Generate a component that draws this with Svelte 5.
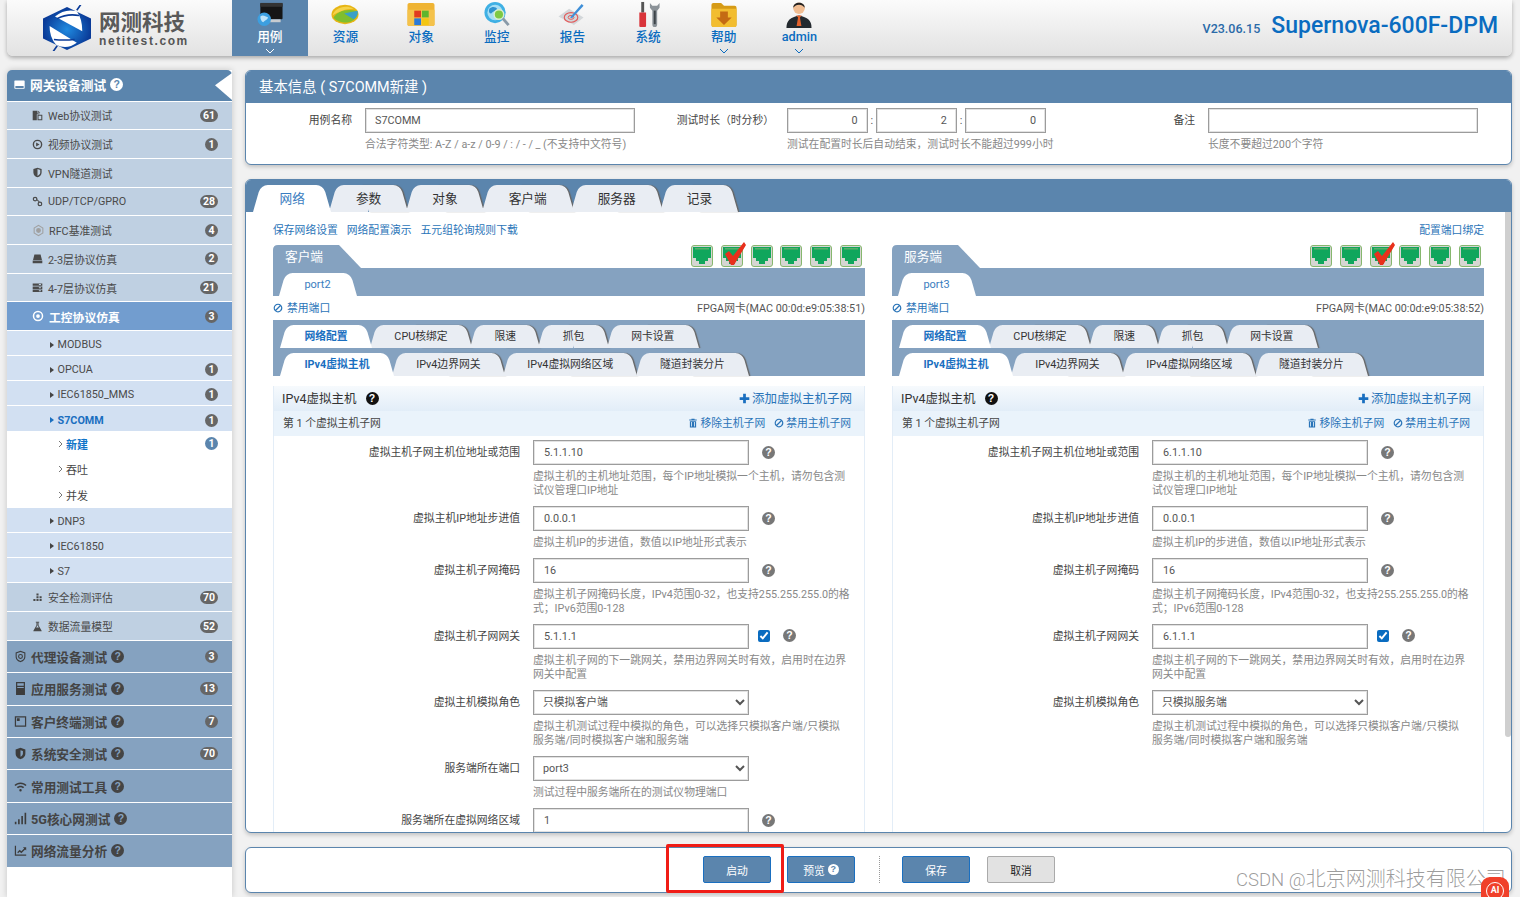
<script>
  // sidebar data
  const topItems = [
    { icon: "file", label: "Web协议测试", n: 61 },
    { icon: "play", label: "视频协议测试", n: 1 },
    { icon: "shield", label: "VPN隧道测试" },
    { icon: "link", label: "UDP/TCP/GPRO", n: 28 },
    { icon: "gear", label: "RFC基准测试", n: 4, light: true },
    { icon: "hdd", label: "2-3层协议仿真", n: 2 },
    { icon: "server", label: "4-7层协议仿真", n: 21 }
  ];
  const protoBefore = [
    { label: "MODBUS" },
    { label: "OPCUA", n: 1 },
    { label: "IEC61850_MMS", n: 1 },
    { label: "S7COMM", n: 1, on: true }
  ];
  const protoAfter = [{ label: "DNP3" }, { label: "IEC61850" }, { label: "S7" }];
  const subItems = [
    { label: "新建", n: 1, on: true },
    { label: "吞吐" },
    { label: "并发" }
  ];
  const bottomItems = [
    { icon: "bars", label: "安全检测评估", n: 70 },
    { icon: "flask", label: "数据流量模型", n: 52 }
  ];
  const groups = [
    { icon: "shieldring", label: "代理设备测试", n: 3 },
    { icon: "calc", label: "应用服务测试", n: 13 },
    { icon: "frame", label: "客户终端测试", n: 7 },
    { icon: "shieldfull", label: "系统安全测试", n: 70 },
    { icon: "wifi", label: "常用测试工具" },
    { icon: "signal", label: "5G核心网测试" },
    { icon: "line", label: "网络流量分析" }
  ];
  const paths = {
    file: "M1 1h7v4h3v1H7v9H1z M9 1l3 3H9z M8 7h7v8H8z M9.5 8.500v5h4v-5z",
    play: "M8 1a7 7 0 1 0 0 14A7 7 0 0 0 8 1zm0 2a5 5 0 1 1 0 10A5 5 0 0 1 8 3z M6 5l5 3-5 3z",
    shield: "M8 1l6 2v5c0 4-3 6-6 7-3-1-6-3-6-7V3z M8 3v10c2-1 4-2.500 4-5V4.500z",
    link: "M4.500 1a3.500 3.500 0 1 0 0 7 3.500 3.500 0 0 0 0-7zm0 1.800a1.700 1.700 0 1 1 0 3.400 1.700 1.700 0 0 1 0-3.400z M11.500 8a3.500 3.500 0 1 0 0 7 3.500 3.500 0 0 0 0-7zm0 1.800a1.700 1.700 0 1 1 0 3.400 1.700 1.700 0 0 1 0-3.400z M7 6l1-1 3 3-1 1z",
    gear: "M8 1l6 3.500v7L8 15l-6-3.500v-7z M8 2.500L3.300 5.200v5.600L8 13.500l4.700-2.700V5.200z M8 5a3 3 0 1 0 0 6 3 3 0 0 0 0-6z",
    hdd: "M3.500 2h9l2 8h-13z M1 11h14v4H1z",
    disk: "M1.500 2h13q1 0 1 1v10q0 1-1 1h-13q-1 0-1-1V3q0-1 1-1z M2 10v3h12v-3z",
    server: "M1 2h14v3.500H1z M1 6.500h14V10H1z M1 11h14v3.500H1z M10 3h3v1.500h-3z M10 7.500h3V9h-3z M10 12h3v1.500h-3z",
    target: "M8 1a7 7 0 1 0 0 14A7 7 0 0 0 8 1zm0 2a5 5 0 1 1 0 10A5 5 0 0 1 8 3z M8 5.500a2.500 2.500 0 1 0 0 5 2.500 2.500 0 0 0 0-5z",
    bars: "M6.500 2h3v3h-3z M6.500 6h3v3h-3z M6.500 10h3v3h-3z M2 10h3v3H2z M11 6h3v3h-3z M11 10h3v3h-3z",
    flask: "M5.500 1h5v1.300h-1v4L14 14v1H2v-1l4.500-7.700v-4h-1z M7.800 2.300v4.300L6 9.500h4L8.200 6.600V2.300z",
    shieldring: "M8 1l6 2v5c0 4-3 6-6 7-3-1-6-3-6-7V3z M8 2.500L3.300 4v4c0 3 2.200 4.700 4.700 5.600 2.500-.9 4.700-2.600 4.700-5.600V4z M8 5a3 3 0 1 0 0 6 3 3 0 0 0 0-6z M8 6.300a1.700 1.700 0 1 1 0 3.400 1.700 1.700 0 0 1 0-3.400z",
    calc: "M2.500 0h11v16h-11z M4 1.500v3h8v-3z M4 6v1.500h8V6z",
    frame: "M1 1.500h14v13H1z M2.500 3v10h11V3z M3.500 4h3.500v3.500H3.500z",
    shieldfull: "M8 1l6 2v5c0 4-3 6-6 7-3-1-6-3-6-7V3z M8 4v8c1.500-.8 3-2 3-4V5z",
    wifi: "M8 3C5 3 2.500 4.200 .5 6L2 7.500C3.500 6 5.600 5 8 5s4.500 1 6 2.500L15.500 6C13.500 4.200 11 3 8 3z M8 7c-1.800 0-3.400.7-4.500 1.800L5 10.300C5.800 9.500 6.800 9 8 9s2.200.5 3 1.300l1.500-1.500C11.400 7.700 9.800 7 8 7z M8 11a1.500 1.500 0 1 0 0 3 1.500 1.500 0 0 0 0-3z",
    signal: "M1 12h2v3H1z M5 9h2v6H5z M9 5h2v10H9z M13 1h2v14h-2z",
    line: "M1 2h1.500v11H15v1.500H1z M4 10l3-3 2 2 3.500-3.500L11 4h4v4l-1.300-1.300L9 11.500l-2-2-2 2z",
    ban: "M8 1a7 7 0 1 0 0 14A7 7 0 0 0 8 1zm0 1.800c1.100 0 2.100.3 2.900.9l-7.200 7.200A5.200 5.200 0 0 1 8 2.800z M12.300 5.100A5.200 5.200 0 0 1 5.100 12.300z",
    trash: "M5.500 1h5v1.500H14V4H2V2.500h3.500z M3 5h10v10H3z M5 6.500v7h1.300v-7z M9.700 6.500v7H11v-7z",
    plus: "M6 1h4v5h5v4h-5v5H6v-5H1V6h5z"
  };

  const nav = [
    { key: "case", label: "用例", on: true, more: true },
    { key: "res", label: "资源" },
    { key: "obj", label: "对象" },
    { key: "mon", label: "监控" },
    { key: "rep", label: "报告" },
    { key: "sys", label: "系统" },
    { key: "help", label: "帮助", more: true },
    { key: "admin", label: "admin", more: true }
  ];

  const mainTabs = ["网络", "参数", "对象", "客户端", "服务器", "记录"];
  const cfgTabs = ["网络配置", "CPU核绑定", "限速", "抓包", "网卡设置"];
  const ipTabs = ["IPv4虚拟主机", "IPv4边界网关", "IPv4虚拟网络区域", "隧道封装分片"];
  const plugs = [0, 1, 2, 3, 4, 5];

  const roleHint = "虚拟主机测试过程中模拟的角色，可以选择只模拟客户端/只模拟服务端/同时模拟客户端和服务端";
  const client = {
    title: "客户端",
    port: "port2",
    checked: 1,
    mac: "FPGA网卡(MAC 00:0d:e9:05:38:51)",
    rows: [
      { label: "虚拟主机子网主机位地址或范围", value: "5.1.1.10", hint: "虚拟主机的主机地址范围，每个IP地址模拟一个主机，请勿包含测试仪管理口IP地址" },
      { label: "虚拟主机IP地址步进值", value: "0.0.0.1", hint: "虚拟主机IP的步进值，数值以IP地址形式表示" },
      { label: "虚拟主机子网掩码", value: "16", hint: "虚拟主机子网掩码长度，IPv4范围0-32，也支持255.255.255.0的格式；IPv6范围0-128" },
      { label: "虚拟主机子网网关", value: "5.1.1.1", check: true, hint: "虚拟主机子网的下一跳网关，禁用边界网关时有效，启用时在边界网关中配置" },
      { label: "虚拟主机模拟角色", select: "只模拟客户端", noHelp: true, hint: roleHint },
      { label: "服务端所在端口", select: "port3", noHelp: true, hint: "测试过程中服务端所在的测试仪物理端口" },
      { label: "服务端所在虚拟网络区域", value: "1" }
    ]
  };
  const server = {
    title: "服务端",
    port: "port3",
    checked: 2,
    mac: "FPGA网卡(MAC 00:0d:e9:05:38:52)",
    rows: [
      { label: "虚拟主机子网主机位地址或范围", value: "6.1.1.10", hint: client.rows[0].hint },
      { label: "虚拟主机IP地址步进值", value: "0.0.0.1", hint: client.rows[1].hint },
      { label: "虚拟主机子网掩码", value: "16", hint: client.rows[2].hint },
      { label: "虚拟主机子网网关", value: "6.1.1.1", check: true, hint: client.rows[3].hint },
      { label: "虚拟主机模拟角色", select: "只模拟服务端", noHelp: true, hint: roleHint }
    ]
  };
</script>

{#snippet icon(name, cls = "")}
  <svg class="ico {cls}" viewBox="0 0 16 16"><path d={paths[name]} fill="currentColor" fill-rule="evenodd" /></svg>
{/snippet}

{#snippet badge(n, on = false)}
  {#if n !== undefined}
    <span class="badge" class:blue={on}>{n}</span>
  {/if}
{/snippet}

{#snippet navIcon(key)}
  <svg class="nav-ico" viewBox="0 0 30 28">
    {#if key === "case"}
      <rect x="5" y="2" width="23" height="17" rx="1" fill="#151515" />
      <rect x="5" y="2" width="23" height="4" fill="#333" />
      <rect x="14" y="19" width="12" height="3" fill="#c8ccd0" />
      <circle cx="9" cy="19" r="7" fill="#3c9fe0" />
      <path d="M5 16c3-2 5 0 8 1-1 3-4 3-5 5-2-1-3-3-3-6z" fill="#bfe3f8" />
    {:else if key === "res"}
      <ellipse cx="15" cy="14" rx="14" ry="10" fill="#e7b514" />
      <path d="M3 17c5-6 10-9 24-7 3 4-1 10-8 12-6 1-13-1-16-5z" fill="#7fbe2e" />
      <path d="M14 13l14-3c1 3-1 7-4 9z" fill="#3aa0c8" />
      <path d="M2 15c2-7 12-12 22-7-9 0-15 3-22 7z" fill="#f5d34a" />
    {:else if key === "obj"}
      <path d="M1 4q0-2 2-2h24q2 0 2 2v20q0 2-2 2H3q-2 0-2-2z" fill="#efb434" />
      <path d="M1 9h28v15q0 2-2 2H3q-2 0-2-2z" fill="#f4c24b" />
      <rect x="8" y="10" width="7" height="7" fill="#e03a20" /><rect x="16" y="10" width="7" height="7" fill="#5fb52e" />
      <rect x="8" y="18" width="7" height="7" fill="#2b7bd8" /><rect x="16" y="18" width="7" height="7" fill="#f3c612" />
    {:else if key === "mon"}
      <circle cx="13" cy="12" r="11" fill="#3fb0e4" />
      <circle cx="13" cy="12" r="8" fill="#a6def5" />
      <path d="M7 8c3-3 7-2 8 0-1 3-4 2-6 5-2 0-3-2-2-5z" fill="#2f92cf" />
      <circle cx="17" cy="14" r="5" fill="#7ec943" stroke="#d8eed0" stroke-width="1.500" />
      <path d="M21 18l6 7" stroke="#8a9aa8" stroke-width="3" />
    {:else if key === "rep"}
      <path d="M1 16l11-8 15 9-10 8z" fill="#d3d7da" />
      <ellipse cx="14" cy="17" rx="7" ry="5" fill="none" stroke="#e25a5a" stroke-width="1.200" />
      <ellipse cx="14" cy="17" rx="3" ry="2" fill="none" stroke="#e25a5a" />
      <path d="M13 17L25 3l2 2-12 13z" fill="#3f8fd8" />
    {:else if key === "sys"}
      <rect x="8" y="1" width="3" height="11" fill="#555" />
      <path d="M6 12h7v14q0 1-1 1H7q-1 0-1-1z" fill="#d9343a" />
      <path d="M17 2v5l2.500 3v14q0 3 2.500 3t2.500-3V10L27 7V2l-2.500 3h-5z" fill="#8b9298" />
      <rect x="21" y="10" width="2" height="14" fill="#3c4348" />
    {:else if key === "help"}
      <path d="M2 4q0-2 2-2h8l3 3h11q2 0 2 2v18q0 2-2 2H4q-2 0-2-2z" fill="#d69b16" />
      <path d="M2 8h26v17q0 2-2 2H4q-2 0-2-2z" fill="#f2bd30" />
      <path d="M11 11h8v6h4l-8 8-8-8h4z" fill="#c46a14" />
    {:else}
      <circle cx="15" cy="7.500" r="6" fill="#f1bd92" />
      <path d="M9 7c0-7 12-7 12 0-2-2-3-3-6-3s-4 1-6 3z" fill="#222" />
      <path d="M2 28c0-8 4-11 13-13 9 2 13 5 13 13z" fill="#23292e" />
      <path d="M12 15h6l-2 2 1.500 9h-5L14 17z" fill="#e2602a" />
    {/if}
  </svg>
{/snippet}

{#snippet plug(checked)}
  <span class="plug">
    <svg viewBox="0 0 22 22" width="22" height="22">
      <rect x=".5" y=".5" width="21" height="21" rx="2.500" fill="#d6d6d2" stroke="#86b76e" />
      <path d="M2 2h18v11h-3v3h-3v3H8v-3H5v-3H2z" fill="#10a65c" />
      <rect x="4" y="3" width="14" height="1.500" fill="#5cae68" />
    </svg>
    {#if checked}
      <svg class="tick" viewBox="0 0 24 26" width="24" height="26">
        <path d="M2 13l4-3 4 5L21 1l2 3-12 20h-3z" fill="#e8301c" />
      </svg>
    {/if}
  </span>
{/snippet}

{#snippet tabs(list, size)}
  <div class="tabs {size}">
    {#each list as t, i}
      <span class="tab" class:active={i === 0}><span class="tab-text">{t}</span></span>
    {/each}
  </div>
{/snippet}

{#snippet panel(p)}
  <section class="panel">
    <div class="panel-head">
      <span class="panel-title">{p.title}</span>
      <span class="plugs">
        {#each plugs as i}
          {@render plug(i === p.checked)}
        {/each}
      </span>
    </div>
    <div class="port-bar">
      <span class="tab active"><span class="tab-text">{p.port}</span></span>
    </div>
    <div class="port-info">
      <a class="link">{@render icon("ban", "sm")}禁用端口</a>
      <span>{p.mac}</span>
    </div>
    <div class="tab-block">
      {@render tabs(cfgTabs, "small")}
      {@render tabs(ipTabs, "small second")}
    </div>
    <div class="section">
      <div class="section-head">
        <span class="section-title">IPv4虚拟主机 <span class="q black">?</span></span>
        <a class="link add">{@render icon("plus", "plus")}添加虚拟主机子网</a>
      </div>
      <div class="subnet-head">
        <span>第 1 个虚拟主机子网</span>
        <span class="subnet-links">
          <a class="link">{@render icon("trash", "sm")}移除主机子网</a>
          <a class="link">{@render icon("ban", "sm")}禁用主机子网</a>
        </span>
      </div>
      <div class="form">
        {#each p.rows as r}
          <div class="form-row">
            <label class="form-label">{r.label}</label>
            <div class="form-ctl">
              {#if r.select}
                <select class="field wide pick">
                  <option>{r.select}</option>
                </select>
              {:else}
                <input class="field wide" value={r.value} />
              {/if}
              {#if r.check}
                <input class="cb" type="checkbox" checked />
              {/if}
              {#if !r.noHelp}
                <span class="q gray">?</span>
              {/if}
            </div>
            {#if r.hint}
              <p class="hint form-hint">{r.hint}</p>
            {/if}
          </div>
        {/each}
      </div>
    </div>
  </section>
{/snippet}

<div class="page">
  <header class="topbar">
    <div class="logo">
      <svg viewBox="2 1 44 44" width="48" height="46" preserveAspectRatio="none">
        <defs>
          <radialGradient id="lg" cx="50%" cy="52%" r="50%">
            <stop offset="0" stop-color="#1f8ae0" />
            <stop offset="1" stop-color="#0a3b98" />
          </radialGradient>
        </defs>
        <path d="M24 3l22 11v19L24 44 2 33V14z" fill="url(#lg)" />
        <path d="M13 12Q22 4 33 7q5 7 5 19z" fill="#fff" />
        <path d="M8 21l25 16q-9 7-19 2Q8 32 8 21z" fill="#fff" />
        <path d="M15 14q9-5 20-3M12 34q9 1 19 0" fill="none" stroke="#0a3b98" stroke-width="1.500" />
        <path d="M33 6l4-6M15 40l-4 6" stroke="#0a3b98" stroke-width="1.500" />
      </svg>
      <div class="logo-text">
        <span class="logo-cn">网测科技</span>
        <span class="logo-en">netitest.com</span>
      </div>
    </div>
    <nav class="nav">
      {#each nav as n}
        <a class="nav-item" class:on={n.on}>
          {@render navIcon(n.key)}
          <span class="nav-label">{n.label}</span>
          {#if n.more}
            <svg class="chev" viewBox="0 0 10 6" width="10" height="6"><path d="M1 1l4 4 4-4" fill="none" stroke="currentColor" /></svg>
          {/if}
        </a>
      {/each}
    </nav>
    <div class="brand">
      <span class="ver">V23.06.15</span>
      <span class="model">Supernova-600F-DPM</span>
    </div>
  </header>

  <div class="body">
    <aside class="side">
      <div class="side-head">
        {@render icon("disk", "head-ico")}
        <span>网关设备测试</span>
        <span class="q white">?</span>
        <span class="notch"></span>
      </div>
      {#each topItems as it}
        <div class="item">
          {@render icon(it.icon, it.light ? "pale" : "")}
          <span class="grow">{it.label}</span>
          {@render badge(it.n)}
        </div>
      {/each}
      <div class="item open">
        {@render icon("target")}
        <span class="grow">工控协议仿真</span>
        {@render badge(3)}
      </div>
      {#each protoBefore as it}
        <div class="proto" class:on={it.on}>
          <i class="tri"></i>
          <span class="grow">{it.label}</span>
          {@render badge(it.n)}
        </div>
      {/each}
      <div class="subs">
        {#each subItems as it}
          <div class="sub" class:on={it.on}>
            <svg class="sub-chev" viewBox="0 0 5 8" width="5" height="8"><path d="M1 1l3 3-3 3" fill="none" stroke="#777" /></svg>
            <span class="grow">{it.label}</span>
            {@render badge(it.n, it.on)}
          </div>
        {/each}
      </div>
      {#each protoAfter as it}
        <div class="proto"><i class="tri"></i><span class="grow">{it.label}</span></div>
      {/each}
      <div class="spacer"></div>
      {#each bottomItems as it}
        <div class="item">
          {@render icon(it.icon)}
          <span class="grow">{it.label}</span>
          {@render badge(it.n)}
        </div>
      {/each}
      {#each groups as g}
        <div class="group">
          {@render icon(g.icon, "group-ico")}
          <span>{g.label}</span>
          <span class="q dark">?</span>
          <span class="grow"></span>
          {@render badge(g.n)}
        </div>
      {/each}
    </aside>

    <main class="main">
      <section class="card info">
        <h2 class="card-title">基本信息 ( S7COMM新建 )</h2>
        <div class="info-grid">
          <label class="info-label">用例名称</label>
          <div>
            <input class="field" value="S7COMM" />
            <p class="hint">合法字符类型: A-Z / a-z / 0-9 / : / - / _ (不支持中文符号)</p>
          </div>
          <label class="info-label">测试时长（时分秒）</label>
          <div>
            <div class="time">
              <input class="field num" value="0" /><span>:</span>
              <input class="field num" value="2" /><span>:</span>
              <input class="field num" value="0" />
            </div>
            <p class="hint">测试在配置时长后自动结束，测试时长不能超过999小时</p>
          </div>
          <label class="info-label">备注</label>
          <div>
            <input class="field" />
            <p class="hint">长度不要超过200个字符</p>
          </div>
        </div>
      </section>

      <section class="card net">
        <div class="net-head">
          {@render tabs(mainTabs, "big")}
        </div>
        <div class="net-links">
          <a class="link">保存网络设置</a>
          <a class="link">网络配置演示</a>
          <a class="link">五元组轮询规则下载</a>
          <a class="link bind">配置端口绑定</a>
        </div>
        <div class="panels">
          {@render panel(client)}
          {@render panel(server)}
        </div>
        <div class="scrollbar"></div>
      </section>

      <section class="card actions">
        <button class="btn">启动</button>
        <button class="btn">预览<span class="q white">?</span></button>
        <span class="divider"></span>
        <button class="btn">保存</button>
        <button class="btn gray">取消</button>
      </section>
    </main>
  </div>

  <div class="redbox"></div>
  <div class="watermark"><span class="wm-latin">CSDN @</span>北京网测科技有限公司</div>
  <div class="ai"><span>AI</span></div>
</div>

<style>
  :global(body) {
    background: #f1f1f1;
  }

  .page {
    position: relative;
    width: 1520px;
    height: 897px;
    overflow: hidden;
    padding: 0 8px 0 7px;
    box-sizing: border-box;
    font-family: Roboto, "Noto Sans CJK SC", sans-serif;
    font-size: 10.8px;
    color: #555;
  }

  /* top bar */
  .topbar {
    display: flex;
    height: 56px;
    background: linear-gradient(#fbfbfb, #e2e2e2);
    border-radius: 0 0 6px 6px;
    box-shadow: 0 2px 4px rgba(0, 0, 0, 0.3);
  }

  .logo {
    display: flex;
    align-items: center;
    gap: 8px;
    width: 225px;
    box-sizing: border-box;
    padding: 0 0 0 36px;
  }

  .logo-text {
    display: flex;
    flex-direction: column;
  }

  .logo-cn {
    font-size: 21.5px;
    line-height: 26px;
    font-weight: 700;
    color: #5a5a5a;
  }

  .logo-en {
    font-family: "Liberation Sans", sans-serif;
    font-size: 12px;
    line-height: 11px;
    font-weight: 700;
    letter-spacing: 1.6px;
    color: #555;
  }

  .nav {
    display: flex;
  }

  .nav-item {
    display: flex;
    flex-direction: column;
    align-items: center;
    width: 75.67px;
    padding-top: 1px;
    box-sizing: border-box;
    color: #0a6cc0;
    position: relative;
  }

  .nav-item.on {
    background: #5b85ad;
    color: #fff;
  }

  .nav-ico {
    width: 30px;
    height: 27px;
  }

  .nav-label {
    font-size: 12.7px;
    line-height: 16px;
    margin-top: 1px;
    font-weight: 500;
  }

  .chev {
    margin-top: 3px;
  }

  .brand {
    margin-left: auto;
    padding: 12px 14px 0 0;
    color: #0a6cc0;
    display: flex;
    align-items: baseline;
    gap: 11px;
  }

  .ver {
    font-size: 12.5px;
    color: #2a6aa8;
    font-weight: 500;
  }

  .model {
    font-size: 23px;
    line-height: 28px;
    font-weight: 500;
  }

  .body {
    display: flex;
    gap: 13px;
    margin-top: 14px;
  }

  /* sidebar */
  .side {
    width: 225px;
    height: 827px;
    background: #fff;
    display: flex;
    flex-direction: column;
    box-shadow: 0 0 6px rgba(0, 0, 0, 0.18);
    flex: none;
    border-radius: 5px 0 0 0;
  }

  .side-head {
    position: relative;
    display: flex;
    align-items: center;
    height: 31px;
    flex: none;
    box-sizing: border-box;
    padding: 0 0 2px 7px;
    margin-bottom: 0.6px;
    background: #5b85ad;
    color: #fff;
    font-size: 12.7px;
    font-weight: 700;
    border-radius: 5px 5px 0 0;
  }

  .head-ico {
    width: 13px;
    height: 13px;
    margin-right: 4px;
    color: #fff;
  }

  .notch {
    position: absolute;
    right: 0;
    top: 3px;
    width: 17px;
    height: 27px;
    background: #fff;
    clip-path: polygon(100% 0, 0 45%, 100% 100%);
  }

  .ico {
    width: 11px;
    height: 11px;
    flex: none;
    margin-right: 5px;
  }

  .pale {
    color: #a0a0a0;
    width: 13px;
    height: 13px;
    margin-right: 4px;
  }

  .grow {
    flex: 1;
  }

  .item {
    display: flex;
    align-items: center;
    height: 27.7px;
    flex: none;
    margin-bottom: 1px;
    padding: 0 14px 0 25px;
    background: #bfd0e2;
    color: #4a4a4a;
  }

  .item.open {
    background: #729dcf;
    color: #fff;
    font-size: 11.8px;
    font-weight: 700;
  }

  .item.open .ico {
    width: 12px;
    height: 12px;
    margin-right: 5px;
  }

  .proto {
    display: flex;
    align-items: center;
    height: 24px;
    flex: none;
    box-sizing: border-box;
    margin-bottom: 1px;
    padding: 3px 14px 0 43px;
    background: #d2e0f2;
    color: #4a4a4a;
  }

  .proto.on {
    color: #1a6fc0;
    font-weight: 700;
    margin-bottom: 0;
    height: 25px;
  }

  .tri {
    width: 0;
    height: 0;
    margin-right: 3.5px;
    border-left: 4px solid #444;
    border-top: 3.5px solid transparent;
    border-bottom: 3.5px solid transparent;
  }

  .proto.on .tri {
    border-left-color: #1a6fc0;
  }

  .subs {
    background: #fff;
    flex: none;
  }

  .sub {
    display: flex;
    align-items: center;
    height: 25.5px;
    padding: 0 14px 0 51px;
    font-size: 11px;
    color: #444;
  }

  .sub.on {
    color: #0f74c8;
    font-weight: 700;
  }

  .sub-chev {
    margin-right: 3px;
  }

  .spacer {
    height: 0.9px;
    flex: none;
  }

  .group {
    display: flex;
    align-items: center;
    height: 31.4px;
    flex: none;
    margin-bottom: 1px;
    padding: 0 14px 0 7px;
    background: #85a2c0;
    color: #444;
    font-size: 12.7px;
    font-weight: 700;
  }

  .group-ico {
    width: 13px;
    height: 13px;
    margin: 0 4px 0 0;
    color: #3c3c3c;
  }

  .badge {
    min-width: 13px;
    height: 13px;
    padding: 0 3px;
    box-sizing: border-box;
    border-radius: 7px;
    background: #666;
    color: #fff;
    font-size: 10.5px;
    line-height: 13px;
    font-weight: 700;
    text-align: center;
  }

  .badge.blue {
    background: #5b85ad;
  }

  .q {
    display: inline-block;
    width: 13px;
    height: 13px;
    margin-left: 4px;
    border-radius: 50%;
    font-family: "Liberation Sans", sans-serif;
    font-size: 10.5px;
    line-height: 13px;
    font-weight: 700;
    text-align: center;
    flex: none;
  }

  .q.white {
    background: #fff;
    color: #5b85ad;
  }

  .q.dark {
    background: #444;
    color: #85a2c0;
  }

  .q.black {
    background: #111;
    color: #fff;
    margin-left: 6px;
    vertical-align: 1px;
  }

  .q.gray {
    background: #777;
    color: #fff;
    margin-left: 13px;
  }

  /* main column */
  .main {
    width: 1267px;
    display: flex;
    flex-direction: column;
    gap: 14px;
  }

  .card {
    position: relative;
    background: #fff;
    border: 1px solid #5b85ad;
    border-radius: 6px;
    box-shadow: 0 2px 4px rgba(0, 0, 0, 0.2);
    box-sizing: border-box;
  }

  .card-title {
    margin: 0;
    height: 32px;
    padding-left: 13px;
    background: #5b85ad;
    color: #fff;
    font-size: 14.4px;
    line-height: 34px;
    font-weight: 400;
    border-radius: 5px 5px 0 0;
  }

  .info {
    height: 95px;
  }

  .info-grid {
    display: grid;
    grid-template-columns: 119px 270px 152px 259px 162px 270px;
    padding-top: 5px;
  }

  .info-label {
    height: 25px;
    line-height: 25px;
    text-align: right;
    color: #444;
    margin-right: 13px;
  }

  .field {
    display: block;
    width: 100%;
    height: 25px;
    box-sizing: border-box;
    padding: 0 9px;
    border: 1px solid #9c9c9c;
    box-shadow: inset 0 0 0 1px #e2e2e2;
    background: #fff;
    color: #555;
    font: inherit;
    outline: none;
  }

  .field.wide {
    width: 216px;
    flex: none;
    padding-left: 10px;
  }

  .field.pick {
    padding-left: 5px;
  }

  .num {
    text-align: right;
  }

  .time {
    display: flex;
    align-items: center;
    gap: 3px;
  }

  .hint {
    margin: 5px 0 0;
    line-height: 14px;
    color: #888;
  }

  .info-grid .hint {
    white-space: nowrap;
  }

  /* network card */
  .net {
    height: 654px;
    overflow: hidden;
  }

  .net-head {
    height: 32px;
    padding-left: 7px;
    background: #5b85ad;
    display: flex;
    align-items: flex-end;
  }

  .tabs {
    display: flex;
  }

  .tab {
    position: relative;
    display: block;
    height: 27px;
    padding: 0 26.5px;
    margin-right: -2px;
    color: #333;
    line-height: 27px;
  }

  .tab::before,
  .tab::after {
    content: "";
    position: absolute;
    top: 0;
    bottom: 0;
    background: #e9edf3;
  }

  .tab::before {
    left: 0;
    right: 50%;
    transform-origin: bottom left;
    transform: skewX(-16deg);
    border-radius: 7px 0 0 0;
  }

  .tab::after {
    right: 0;
    left: 50%;
    transform-origin: bottom right;
    transform: skewX(16deg);
    border-radius: 0 7px 0 0;
    box-shadow: 1.5px 0 1px #666;
  }

  .tab.active {
    z-index: 2;
    color: #3a7dc0;
  }

  .tab.active::before,
  .tab.active::after {
    background: #fff;
    box-shadow: none;
  }

  .tab-text {
    position: relative;
    z-index: 1;
  }

  .tabs.big {
    font-size: 12.7px;
  }

  .tabs.small {
    font-size: 10.8px;
    padding: 5px 0 0 7px;
  }

  .tabs.small .tab {
    height: 23px;
    line-height: 23px;
    padding: 0 24.4px;
  }

  .tabs.small .tab.active {
    color: #1a6fc0;
    font-weight: 700;
  }

  .tabs.second {
    padding-top: 5px;
  }

  .net-links {
    display: flex;
    align-items: center;
    gap: 9px;
    height: 33px;
    padding: 0 27px;
  }

  .link {
    color: #2a74b8;
  }

  .bind {
    margin-left: auto;
  }

  .panels {
    display: grid;
    grid-template-columns: 592px 592px;
    column-gap: 27px;
    padding-left: 27px;
  }

  .panel {
    display: flex;
    flex-direction: column;
    min-height: 600px;
  }

  .panel-head {
    display: flex;
    justify-content: space-between;
    height: 23px;
  }

  .panel-title {
    width: 88px;
    padding-left: 12px;
    box-sizing: border-box;
    background: #85a2c0;
    color: #fff;
    font-size: 12.7px;
    line-height: 23px;
    clip-path: path("M0 5 Q0 0 5 0 L66 0 L88 23 L0 23 Z");
  }

  .plugs {
    display: flex;
    gap: 7.8px;
    padding-right: 3px;
  }

  .plug {
    position: relative;
    width: 22px;
    height: 22px;
  }

  .plug svg {
    display: block;
  }

  .tick {
    position: absolute;
    left: 2px;
    top: -4px;
  }

  .port-bar {
    height: 28px;
    background: #85a2c0;
    padding: 5px 0 0 6px;
    box-sizing: border-box;
  }

  .port-bar .tab {
    display: inline-block;
    height: 23px;
    width: 77px;
    padding: 0;
    text-align: center;
    line-height: 24px;
    font-size: 11px;
  }

  .port-info {
    display: flex;
    justify-content: space-between;
    align-items: center;
    height: 24px;
    padding-bottom: 3px;
    box-sizing: border-box;
    color: #555;
  }

  .port-info .sm {
    margin-right: 4px;
  }

  .sm {
    width: 10px;
    height: 10px;
    margin-right: 2px;
    vertical-align: -1px;
  }

  .plus {
    width: 11px;
    height: 11px;
    margin-right: 2px;
    vertical-align: -1px;
    color: #1a6fc0;
  }

  .tab-block {
    height: 56px;
    background: #85a2c0;
  }

  .section {
    margin-top: 10px;
    border-left: 1px solid #e3edf7;
    border-right: 1px solid #e3edf7;
    flex: 1;
  }

  .section-head {
    display: flex;
    justify-content: space-between;
    align-items: center;
    height: 25px;
    padding: 0 12px 3px 8px;
    box-sizing: border-box;
    background: linear-gradient(#f6fafd, #e2edf8);
    color: #333;
  }

  .section-title {
    font-size: 12.5px;
  }

  .add {
    font-size: 12.5px;
  }

  .subnet-head {
    display: flex;
    justify-content: space-between;
    align-items: center;
    height: 25px;
    padding: 0 13px 3px 9px;
    box-sizing: border-box;
    background: #eaf3fb;
    color: #444;
  }

  .subnet-links {
    display: flex;
    gap: 9px;
  }

  .form {
    padding-top: 4px;
  }

  .form-row {
    display: grid;
    grid-template-columns: 246px 1fr;
    column-gap: 13px;
    margin-bottom: 8px;
  }

  .form-label {
    line-height: 25px;
    text-align: right;
    color: #444;
  }

  .form-ctl {
    display: flex;
    align-items: center;
    height: 25px;
  }

  .form-hint {
    grid-column: 2;
    width: 317.5px;
  }

  .cb {
    margin: 0 0 2px 9px;
    width: 12px;
    height: 12px;
    accent-color: #0a6cc0;
  }

  .cb + .q {
    margin-bottom: 2px;
  }

  .scrollbar {
    position: absolute;
    right: 0;
    top: 32px;
    width: 6px;
    height: 525px;
    background: #cfcfcf;
    border-radius: 0 0 3px 3px;
  }

  /* footer buttons */
  .actions {
    height: 46px;
    display: flex;
    align-items: center;
    padding: 0 0 1px 457px;
  }

  .btn {
    display: flex;
    align-items: center;
    justify-content: center;
    width: 68px;
    height: 27px;
    padding: 0;
    border: 1px solid #1a6fc0;
    border-radius: 2px;
    background: #5b85ad;
    color: #fff;
    font: inherit;
    margin-right: 16px;
  }

  .btn .q {
    width: 11px;
    height: 11px;
    margin-left: 3px;
    font-size: 9px;
    line-height: 11px;
  }

  .btn.gray {
    margin-left: 1px;
    background: #e2e2e2;
    border-color: #aaa;
    color: #222;
  }

  .divider {
    height: 27px;
    margin: 0 22px 0 8px;
    border-left: 1px dotted #999;
  }

  /* annotations on top of the screenshot */
  .redbox {
    position: absolute;
    left: 666px;
    top: 844px;
    width: 118px;
    height: 49px;
    box-sizing: border-box;
    border: 3px solid #f01c16;
    border-radius: 2px;
  }

  .watermark {
    position: absolute;
    left: 1236px;
    top: 865px;
    font-size: 20px;
    line-height: 28px;
    font-weight: 300;
    color: rgba(90, 90, 90, 0.6);
    white-space: nowrap;
  }

  .wm-latin {
    font-size: 18.5px;
  }

  .ai {
    position: absolute;
    left: 1481px;
    top: 877px;
    width: 28px;
    height: 28px;
    background: #f0402a;
    border-radius: 9px;
    display: flex;
    align-items: center;
    justify-content: center;
  }

  .ai span {
    width: 18px;
    height: 18px;
    border: 1.5px solid #fff;
    border-radius: 50%;
    box-sizing: border-box;
    color: #fff;
    font-size: 9px;
    line-height: 15px;
    text-align: center;
    font-weight: 700;
  }
</style>
